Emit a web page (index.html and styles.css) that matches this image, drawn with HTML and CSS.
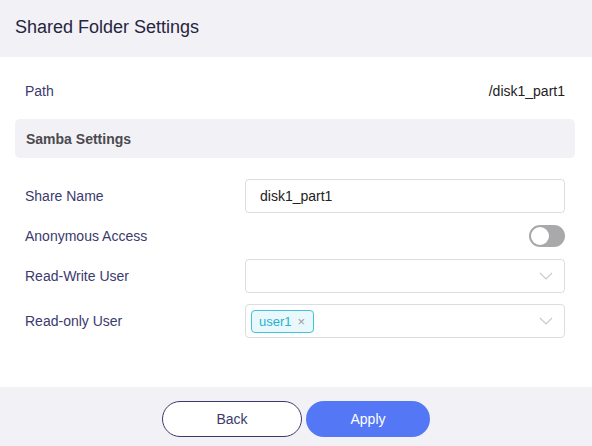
FILE: index.html
```html
<!DOCTYPE html>
<html lang="en">
<head>
  <meta charset="UTF-8" />
  <title>Shared Folder Settings</title>
  <link rel="stylesheet" href="styles.css">
</head>
<body>
<div class="dialog">
  <div class="dialog-header">Shared Folder Settings</div>

  <div class="dialog-body">
    <div class="row path-row">
      <span class="label">Path</span>
      <span class="value">/disk1_part1</span>
    </div>

    <div class="section-title">Samba Settings</div>

    <div class="form">
      <div class="row">
        <span class="label">Share Name</span>
        <div class="input">disk1_part1</div>
      </div>
      <div class="row toggle-row">
        <span class="label">Anonymous Access</span>
        <span class="switch"><span class="knob"></span></span>
      </div>
      <div class="row">
        <span class="label">Read-Write User</span>
        <div class="input select">
          <span class="tags"></span>
          <svg class="arrow" width="14" height="8" viewBox="0 0 14 8"><path d="M1 1l6 6 6-6" fill="none" stroke="#c8cad0" stroke-width="1.2"/></svg>
        </div>
      </div>
      <div class="row">
        <span class="label">Read-only User</span>
        <div class="input select">
          <span class="tags">
            <span class="tag">user1 <span class="tag-close">&times;</span></span>
          </span>
          <svg class="arrow" width="14" height="8" viewBox="0 0 14 8"><path d="M1 1l6 6 6-6" fill="none" stroke="#c8cad0" stroke-width="1.2"/></svg>
        </div>
      </div>
    </div>
  </div>

  <div class="dialog-footer">
    <button class="btn btn-back">Back</button>
    <button class="btn btn-apply">Apply</button>
  </div>
</div>
</body>
</html>
```

FILE: styles.css
```css
html, body {
  margin: 0;
  padding: 0;
  background: white;
  font-family: "Liberation Sans", Arial, sans-serif;
}

.dialog {
  width: 592px;
  height: 446px;
  display: flex;
  flex-direction: column;
}

.dialog-header {
  height: 57px;
  background: #f2f1f6;
  display: flex;
  align-items: center;
  padding-left: 15px;
  padding-bottom: 2px;
  box-sizing: border-box;
  font-size: 18px;
  color: #27253f;
}

.dialog-body {
  flex: 1;
  padding: 14px 17px 0 15px;
}

.row {
  display: flex;
  align-items: center;
  justify-content: space-between;
  padding: 0 10px;
}

.label {
  font-size: 14px;
  color: #3b3a6c;
}

.path-row {
  height: 40px;
}

.path-row .value {
  font-size: 14px;
  color: #222;
}

.section-title {
  margin-top: 8px;
  height: 39px;
  background: #f2f1f6;
  border-radius: 5px;
  display: flex;
  align-items: center;
  padding-left: 11px;
  font-size: 14px;
  font-weight: bold;
  color: #4a4a4f;
}

.form {
  margin-top: 21px;
  display: flex;
  flex-direction: column;
  gap: 11px;
}

.input {
  width: 320px;
  height: 34px;
  box-sizing: border-box;
  border: 1px solid #dcdde2;
  border-radius: 4px;
  display: flex;
  align-items: center;
  padding-left: 14px;
  font-size: 14px;
  color: #222;
}

.toggle-row {
  height: 24px;
}

.switch {
  width: 36px;
  height: 22px;
  border-radius: 11px;
  background: #a9a9ab;
  position: relative;
}

.knob {
  position: absolute;
  top: 2px;
  left: 2px;
  width: 18px;
  height: 18px;
  border-radius: 50%;
  background: white;
}

.select {
  padding: 0 11px 0 5px;
  justify-content: space-between;
}

.tags {
  display: flex;
}

.tag {
  height: 23px;
  box-sizing: border-box;
  padding: 0 8px 0 7px;
  border: 1px solid #3ec3d9;
  border-radius: 4px;
  background: #e9f8fc;
  color: #1fb2cc;
  font-size: 13px;
  display: flex;
  align-items: center;
  gap: 6px;
}

.tag-close {
  color: #9a9aa0;
  font-size: 13px;
}

.dialog-footer {
  height: 59px;
  background: #f2f1f6;
  display: flex;
  justify-content: center;
  align-items: flex-start;
  padding-top: 14px;
  box-sizing: border-box;
  gap: 4px;
}

.btn {
  height: 36px;
  border-radius: 18px;
  font-family: "Liberation Sans", Arial, sans-serif;
  font-size: 14px;
}

.btn-back {
  width: 140px;
  background: white;
  border: 1px solid #3b3a6c;
  color: #3b3a6c;
}

.btn-apply {
  width: 124px;
  background: #5477f6;
  border: none;
  color: white;
}
```
